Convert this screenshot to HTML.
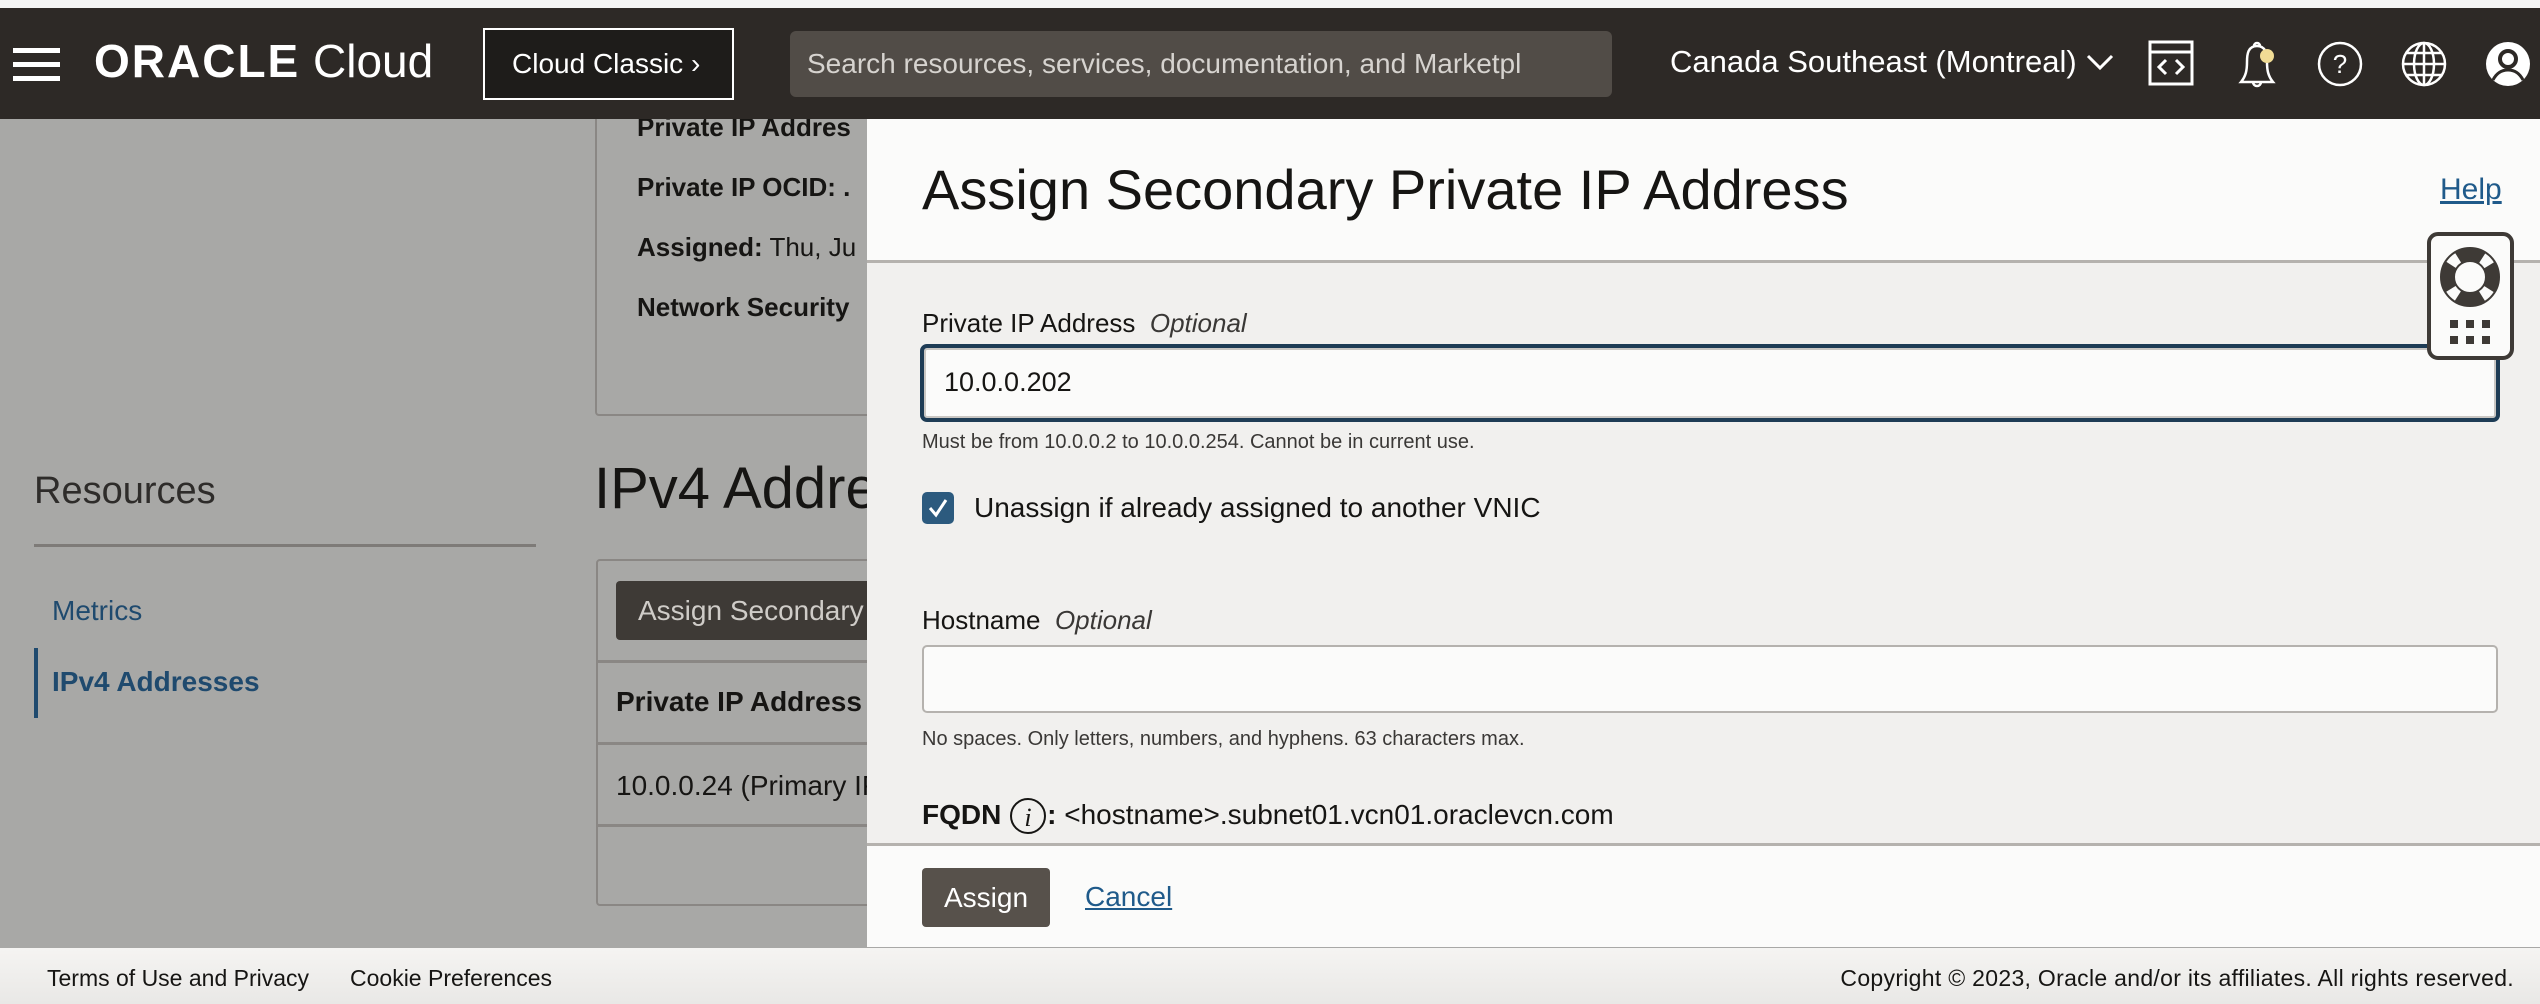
<!DOCTYPE html>
<html><head><meta charset="utf-8"><style>
*{margin:0;padding:0;box-sizing:border-box}
body{width:2540px;height:1004px;position:relative;overflow:hidden;background:#a8a8a6;font-family:"Liberation Sans",sans-serif;color:#161513}
.a{position:absolute;white-space:nowrap}
</style></head><body>
<div class="a" style="left:0;top:0;width:2540px;height:8px;background:#f4f4f4"></div>
<div class="a" style="left:34px;top:470px;font-size:38px;color:#2e2c2a;font-weight:300">Resources</div>
<div class="a" style="left:34px;top:544px;width:502px;height:3px;background:#7e7b78"></div>
<div class="a" style="left:52px;top:595px;font-size:28px;color:#1f4a6e">Metrics</div>
<div class="a" style="left:34px;top:648px;width:4px;height:70px;background:#1f4a6e"></div>
<div class="a" style="left:52px;top:666px;font-size:28px;color:#1f4a6e;font-weight:bold">IPv4 Addresses</div>
<div class="a" style="left:595px;top:100px;width:300px;height:316px;border:2px solid #8a8784;border-top:none;border-radius:0 0 4px 4px"></div>
<div class="a" style="left:637px;top:112px;font-size:26px;font-weight:bold">Private IP Addres</div>
<div class="a" style="left:637px;top:172px;font-size:26px;font-weight:bold">Private IP OCID: .</div>
<div class="a" style="left:637px;top:232px;font-size:26px"><b>Assigned:</b> Thu, Ju</div>
<div class="a" style="left:637px;top:292px;font-size:26px;font-weight:bold">Network Security</div>
<div class="a" style="left:594px;top:455px;font-size:58px">IPv4 Addre</div>
<div class="a" style="left:596px;top:559px;width:300px;height:347px;border:2px solid #8a8784;border-radius:4px"></div>
<div class="a" style="left:616px;top:581px;width:270px;height:59px;background:#3e3a36;border-radius:4px;color:#cfccc8;font-size:28px;line-height:59px;padding-left:22px">Assign Secondary</div>
<div class="a" style="left:597px;top:660px;width:300px;height:3px;background:#8a8784"></div>
<div class="a" style="left:616px;top:686px;font-size:28px;font-weight:bold">Private IP Address</div>
<div class="a" style="left:597px;top:742px;width:300px;height:3px;background:#8a8784"></div>
<div class="a" style="left:616px;top:770px;font-size:28px">10.0.0.24 (Primary IP</div>
<div class="a" style="left:597px;top:824px;width:300px;height:3px;background:#8a8784"></div>
<div class="a" style="left:0;top:8px;width:2540px;height:111px;background:#2d2926"></div>
<div class="a" style="left:13px;top:48px;width:47px;height:5px;background:#fff;box-shadow:0 14px 0 #fff,0 28px 0 #fff"></div>
<div class="a" style="left:94px;top:38px;font-size:46px;color:#fff;line-height:1"><span style="font-weight:bold;letter-spacing:2px">ORACLE</span> <span style="font-weight:normal">Cloud</span></div>
<div class="a" style="left:483px;top:28px;width:251px;height:72px;border:2px solid #fff;background:#1e1c1a;color:#fff;font-size:28px;line-height:68px;padding-left:27px">Cloud Classic ›</div>
<div class="a" style="left:790px;top:31px;width:822px;height:66px;background:#514c47;border-radius:6px;color:#d6d3cf;font-size:28px;line-height:66px;padding-left:17px">Search resources, services, documentation, and Marketpl</div>
<div class="a" style="left:1670px;top:44px;font-size:31px;color:#fff">Canada Southeast (Montreal) <svg width="30" height="20" viewBox="0 0 30 20"><path d="M3 4l12 12 12-12" stroke="#fff" stroke-width="3" fill="none"/></svg></div>
<svg class="a" style="left:2148px;top:40px" width="48" height="48" viewBox="0 0 48 48" fill="none" stroke="#fff" stroke-width="3"><rect x="2" y="2" width="42" height="42"/><path d="M2 12h42M18 20l-7 7 7 7M28 20l7 7-7 7"/></svg>
<svg class="a" style="left:2234px;top:40px" width="50" height="50" viewBox="0 0 50 50" fill="none" stroke="#fff" stroke-width="2.5"><path d="M20 6a3 3 0 016 0M23 6c-9 0-10 8-10 16s-1 14-6 20h32c-5-6-6-12-6-20s-1-16-10-16z M19 42a4 4 0 008 0"/><circle cx="33" cy="16" r="7" fill="#f1dc95" stroke="none"/></svg>
<svg class="a" style="left:2317px;top:40px" width="46" height="48" viewBox="0 0 46 48" fill="none" stroke="#fff" stroke-width="2.5"><circle cx="23" cy="24" r="21"/><text x="23" y="33" fill="#fff" stroke="none" font-size="26" text-anchor="middle" font-family="Liberation Sans">?</text></svg>
<svg class="a" style="left:2400px;top:40px" width="48" height="48" viewBox="0 0 48 48" fill="none" stroke="#fff" stroke-width="2.5"><circle cx="24" cy="24" r="21"/><ellipse cx="24" cy="24" rx="10" ry="21"/><path d="M24 3v42M3 24h42M7 13h34M7 35h34"/></svg>
<svg class="a" style="left:2485px;top:40px" width="46" height="48" viewBox="0 0 46 48"><circle cx="23" cy="24" r="22" fill="#fff"/><circle cx="23" cy="19" r="8" fill="none" stroke="#2d2926" stroke-width="4"/><path d="M8 40c4-8 10-10 15-10s11 2 15 10" fill="none" stroke="#2d2926" stroke-width="3"/></svg>
<div class="a" style="left:867px;top:119px;width:1673px;height:142px;background:#fbfbfa"></div>
<div class="a" style="left:867px;top:260px;width:1673px;height:3px;background:#b5b2ae"></div>
<div class="a" style="left:867px;top:263px;width:1673px;height:580px;background:#f1f0ee"></div>
<div class="a" style="left:867px;top:843px;width:1673px;height:3px;background:#b5b2ae"></div>
<div class="a" style="left:867px;top:846px;width:1673px;height:101px;background:#fbfbfa"></div>
<div class="a" style="left:922px;top:157px;font-size:56px">Assign Secondary Private IP Address</div>
<div class="a" style="left:2440px;top:173px;font-size:30px;color:#1f5a8a;text-decoration:underline">Help</div>
<div class="a" style="left:922px;top:308px;font-size:26px;color:#161513">Private IP Address&nbsp; <i style="color:#3a3836">Optional</i></div>
<div class="a" style="left:920px;top:344px;width:1580px;height:78px;border:4px solid #1e3c55;border-radius:7px;background:#fbfbfa;box-shadow:inset 0 0 0 2px #c9c6c2"></div>
<div class="a" style="left:944px;top:367px;font-size:27px">10.0.0.202</div>
<div class="a" style="left:922px;top:431px;font-size:20px;color:#3a3836">Must be from 10.0.0.2 to 10.0.0.254. Cannot be in current use.</div>
<div class="a" style="left:922px;top:492px;width:32px;height:32px;background:#2c5a7e;border-radius:5px"><svg width="32" height="32" viewBox="0 0 32 32"><path d="M8 16l6 7 10-15" stroke="#fff" stroke-width="3" fill="none"/></svg></div>
<div class="a" style="left:974px;top:492px;font-size:28px">Unassign if already assigned to another VNIC</div>
<div class="a" style="left:922px;top:605px;font-size:26px">Hostname&nbsp; <i style="color:#3a3836">Optional</i></div>
<div class="a" style="left:922px;top:645px;width:1576px;height:68px;border:2px solid #b5b2ae;border-radius:5px;background:#fbfbfa"></div>
<div class="a" style="left:922px;top:728px;font-size:20px;color:#3a3836">No spaces. Only letters, numbers, and hyphens. 63 characters max.</div>
<div class="a" style="left:922px;top:796px;font-size:28px"><b>FQDN</b> <svg width="38" height="40" viewBox="0 0 38 40" style="vertical-align:-12px"><circle cx="19" cy="20" r="17" fill="none" stroke="#161513" stroke-width="2"/><text x="19" y="30" font-size="26" font-style="italic" font-family="Liberation Serif" text-anchor="middle" fill="#161513">i</text></svg><b>:</b> &lt;hostname&gt;.subnet01.vcn01.oraclevcn.com</div>
<div class="a" style="left:922px;top:868px;width:128px;height:59px;background:#57514b;border-radius:4px;color:#fff;font-size:28px;line-height:59px;text-align:center">Assign</div>
<div class="a" style="left:1085px;top:881px;font-size:28px;color:#1f5a8a;text-decoration:underline">Cancel</div>
<div class="a" style="left:2427px;top:232px;width:87px;height:128px;border:4px solid #3e3a36;border-radius:11px;background:#fbfbfa">
<svg width="79" height="120" viewBox="0 0 79 120"><circle cx="39" cy="41" r="22.5" fill="none" stroke="#3e3a36" stroke-width="15"/><circle cx="39" cy="41" r="22.5" fill="none" stroke="#fbfbfa" stroke-width="11" stroke-dasharray="10 25.35" stroke-dashoffset="-12.7"/>
<g fill="#3e3a36"><rect x="19" y="84" width="8" height="8"/><rect x="35" y="84" width="8" height="8"/><rect x="51" y="84" width="8" height="8"/><rect x="19" y="100" width="8" height="8"/><rect x="35" y="100" width="8" height="8"/><rect x="51" y="100" width="8" height="8"/></g></svg></div>
<div class="a" style="left:0;top:948px;width:2540px;height:56px;background:linear-gradient(#f5f4f2,#e9e8e6)"></div>
<div class="a" style="left:47px;top:965px;font-size:23px">Terms of Use and Privacy</div>
<div class="a" style="left:350px;top:965px;font-size:23px">Cookie Preferences</div>
<div class="a" style="right:26px;top:965px;font-size:23px;letter-spacing:0.3px">Copyright © 2023, Oracle and/or its affiliates. All rights reserved.</div>
</body></html>
